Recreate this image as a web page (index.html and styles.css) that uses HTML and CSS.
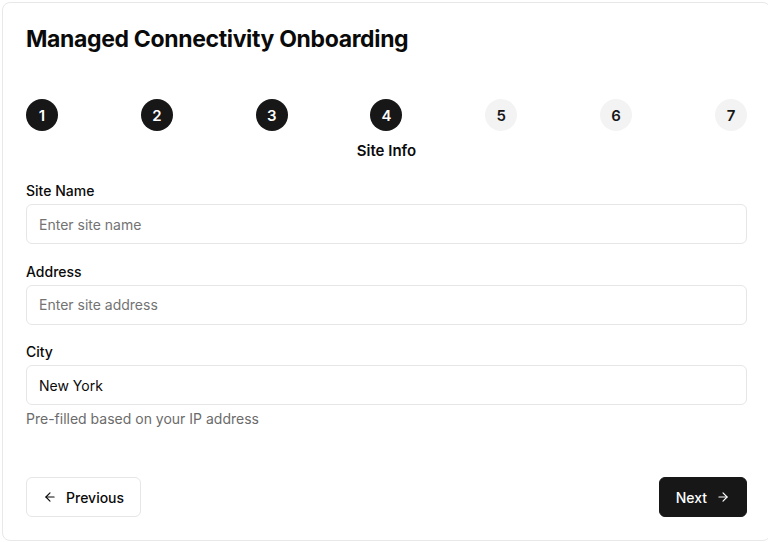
FILE: index.html
```html
<!DOCTYPE html>
<html lang="en">
<head>
  <meta charset="UTF-8">
  <meta name="viewport" content="width=device-width, initial-scale=1.0">
  <title>Managed Connectivity Onboarding</title>
  <link rel="stylesheet" href="styles.css">
</head>
<body>

  <div class="card">
    <h1>Managed Connectivity Onboarding</h1>

    <div class="steps">
      <div class="step done"><span class="dot">1</span></div>
      <div class="step done"><span class="dot">2</span></div>
      <div class="step done"><span class="dot">3</span></div>
      <div class="step done"><span class="dot">4</span><span class="step-label">Site Info</span></div>
      <div class="step"><span class="dot">5</span></div>
      <div class="step"><span class="dot">6</span></div>
      <div class="step"><span class="dot">7</span></div>
    </div>

    <div class="field">
      <label for="siteName">Site Name</label>
      <input type="text" id="siteName" placeholder="Enter site name">
    </div>

    <div class="field">
      <label for="address">Address</label>
      <input type="text" id="address" placeholder="Enter site address">
    </div>

    <div class="field">
      <label for="city">City</label>
      <input type="text" id="city" value="New York">
      <p class="hint">Pre-filled based on your IP address</p>
    </div>

    <div class="actions">
      <button class="btn btn-outline">
        <svg width="14" height="14" viewBox="0 0 24 24" fill="none" stroke="currentColor" stroke-width="2" stroke-linecap="round" stroke-linejoin="round"><path d="M19 12H5"/><path d="M12 19l-7-7 7-7"/></svg>
        Previous
      </button>
      <button class="btn btn-dark">
        Next
        <svg width="14" height="14" viewBox="0 0 24 24" fill="none" stroke="currentColor" stroke-width="2" stroke-linecap="round" stroke-linejoin="round"><path d="M5 12h14"/><path d="M12 5l7 7-7 7"/></svg>
      </button>
    </div>
  </div>

</body>
</html>
```

FILE: styles.css
```css
* {
  box-sizing: border-box;
}
html, body {
  overflow: hidden;
}
body {
  margin: 0;
  background: #fff;
  font-family: Inter, "Noto Sans", sans-serif;
  color: #0a0a0a;
}
.card {
  margin: 2px 0 0 2px;
  width: 769px;
  height: 539px;
  border: 1px solid #e8e8e8;
  border-radius: 8px;
  padding: 22px 23px 0;
}
h1 {
  margin: 0;
  font-size: 23px;
  font-weight: 700;
  letter-spacing: -0.35px;
  line-height: 28px;
}
/* stepper */
.steps {
  display: flex;
  justify-content: space-between;
  margin-top: 46px;
  height: 83px;
}
.step {
  width: 32px;
  display: flex;
  flex-direction: column;
  align-items: center;
}
.dot {
  width: 32px;
  height: 32px;
  border-radius: 50%;
  background: #f3f3f3;
  color: #171717;
  display: flex;
  align-items: center;
  justify-content: center;
  font-size: 15px;
  font-weight: 600;
  flex-shrink: 0;
}
.step.done .dot {
  background: #171717;
  color: #fff;
}
.step-label {
  margin-top: 10px;
  white-space: nowrap;
  font-size: 15px;
  font-weight: 600;
}
/* form */
.field {
  margin-bottom: 18.5px;
}
.field label {
  display: block;
  font-size: 14px;
  font-weight: 500;
  line-height: 18px;
  margin-bottom: 4px;
}
.field input {
  width: 100%;
  height: 40px;
  padding: 0 12px;
  border: 1px solid #e6e6e6;
  border-radius: 6px;
  font-family: inherit;
  font-size: 14px;
  color: #0a0a0a;
  background: #fff;
}
.field input::placeholder {
  color: #737373;
}
.hint {
  margin: 6px 0 0;
  font-size: 14px;
  color: #6b6b6b;
  line-height: 16px;
}
/* buttons */
.actions {
  display: flex;
  justify-content: space-between;
  margin-top: 50px;
}
.btn {
  display: flex;
  align-items: center;
  gap: 9px;
  height: 40px;
  padding: 0 16px;
  border-radius: 6px;
  font-family: inherit;
  font-size: 14px;
  font-weight: 500;
  cursor: pointer;
}
.btn-outline {
  background: #fff;
  border: 1px solid #e6e6e6;
  color: #0a0a0a;
}
.btn-dark {
  background: #171717;
  border: 1px solid #171717;
  color: #fff;
}
```
